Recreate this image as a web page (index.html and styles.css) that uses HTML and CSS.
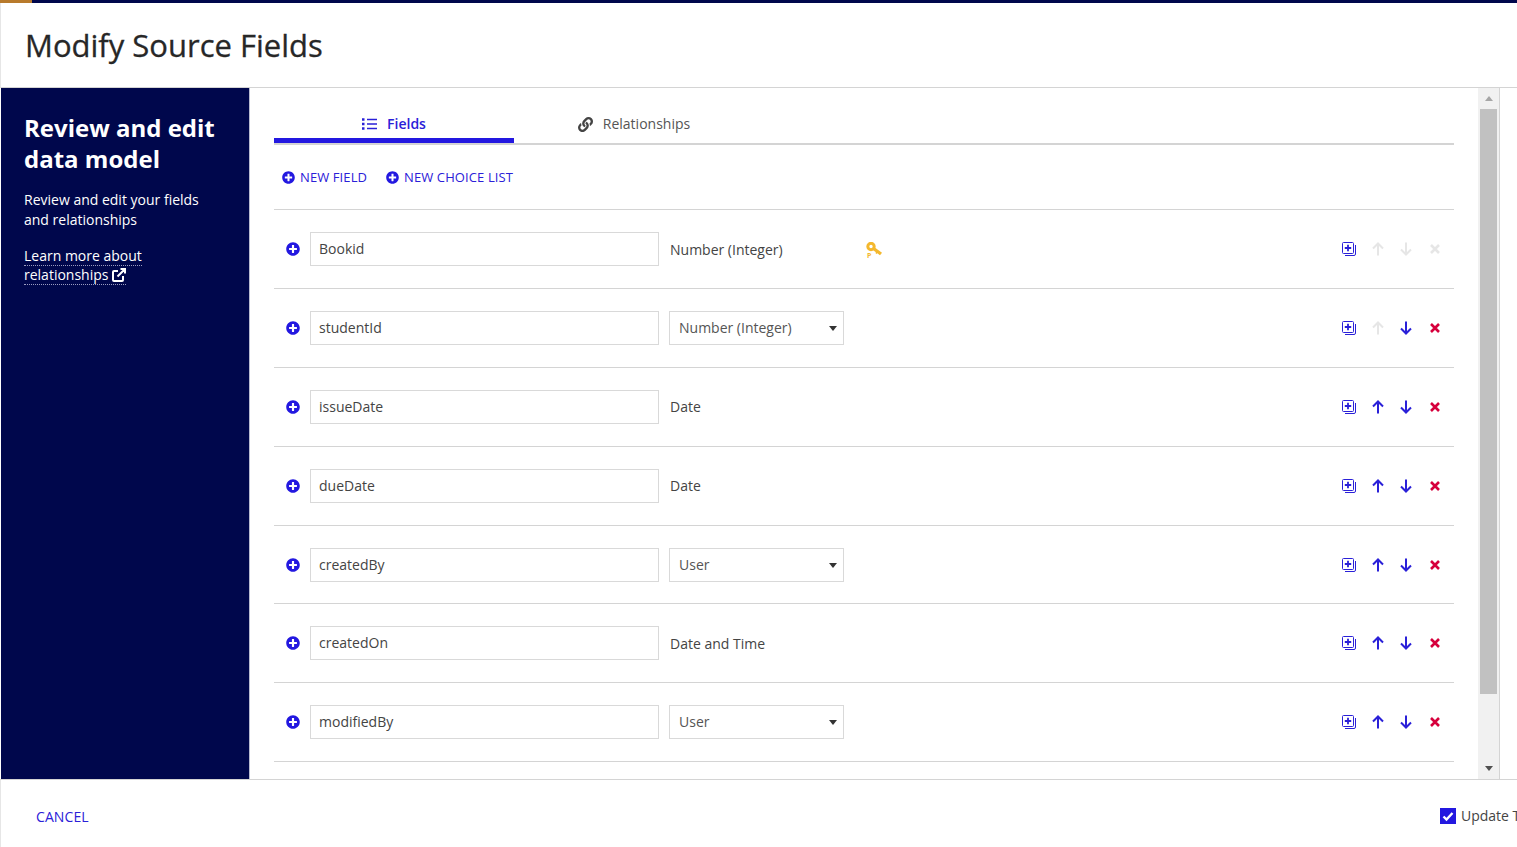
FILE: index.html
```html
<!DOCTYPE html>
<html lang="en">
<head>
    <meta charset="UTF-8">
    <title>Modify Source Fields</title>
    <link rel="stylesheet" href="styles.css">
</head>
<body>
    <svg class="sprite" xmlns="http://www.w3.org/2000/svg">
        <symbol id="i-plus" viewBox="0 0 512 512"><path fill="currentColor" d="M256 8C119 8 8 119 8 256s111 248 248 248 248-111 248-248S393 8 256 8zm144 276c0 6.6-5.4 12-12 12h-92v92c0 6.6-5.4 12-12 12h-56c-6.6 0-12-5.4-12-12v-92h-92c-6.6 0-12-5.4-12-12v-56c0-6.6 5.4-12 12-12h92v-92c0-6.6 5.4-12 12-12h56c6.6 0 12 5.4 12 12v92h92c6.6 0 12 5.4 12 12v56z"/></symbol>
        <symbol id="i-copy" viewBox="0 0 14 14"><path fill="none" stroke="currentColor" stroke-width="1" d="M1.5.5h9a1 1 0 0 1 1 1v9a1 1 0 0 1-1 1h-9a1 1 0 0 1-1-1v-9a1 1 0 0 1 1-1z"/><path fill="none" stroke="currentColor" stroke-width="1" d="M13.5 3v9a1.5 1.5 0 0 1-1.5 1.5H3"/><path fill="none" stroke="currentColor" stroke-width="1.8" d="M6 2.800v6.400M2.800 6h6.400"/></symbol>
        <symbol id="i-up" viewBox="0 0 12 14"><path fill="none" stroke="currentColor" stroke-width="2" d="M6 13.500V1.500M1 6.500l5-5 5 5"/></symbol>
        <symbol id="i-down" viewBox="0 0 12 14"><path fill="none" stroke="currentColor" stroke-width="2" d="M6 .5v12M1 7.500l5 5 5-5"/></symbol>
        <symbol id="i-x" viewBox="0 0 10 10"><path fill="none" stroke="currentColor" stroke-width="2.600" d="M1 1l8 8M9 1l-8 8"/></symbol>
    </svg>

    <div class="topstrip"><span class="topstrip-logo"></span></div>

    <header class="header">
        <h1>Modify Source Fields</h1>
    </header>

    <div class="body-wrap">
        <aside class="sidebar">
            <h2>Review and edit data model</h2>
            <p>Review and edit your fields and relationships</p>
            <a class="learn" href="#"><span>Learn more about</span><br><span>relationships <svg class="ext" viewBox="0 0 14 14"><path fill="none" stroke="currentColor" stroke-width="2" d="M11 8v4a1 1 0 0 1-1 1H2a1 1 0 0 1-1-1V4a1 1 0 0 1 1-1h4M5.500 8.500L13 1M8.500 1H13v4.500"/></svg></span></a>
        </aside>

        <main class="content">
            <div class="tabs">
                <div class="tab active">
                    <svg class="tab-icon" viewBox="0 0 15 12"><path fill="none" stroke="currentColor" stroke-width="1.600" d="M5 1.500h10M5 6h10M5 10.500h10"/><path fill="none" stroke="currentColor" stroke-width="2.400" d="M0 1.500h2.500M0 6h2.500M0 10.500h2.500"/></svg>
                    Fields
                </div>
                <div class="tab">
                    <svg class="tab-icon link-icon" viewBox="0 0 512 512"><path fill="currentColor" d="M326.612 185.391c59.747 59.809 58.927 155.698.36 214.59-.11.12-.24.25-.36.37l-67.2 67.2c-59.27 59.27-155.699 59.262-214.96 0-59.27-59.26-59.27-155.7 0-214.96l37.106-37.106c9.84-9.84 26.786-3.3 27.294 10.606.648 17.722 3.826 35.527 9.69 52.721 1.986 5.822.567 12.262-3.783 16.612l-13.087 13.087c-28.026 28.026-28.905 73.66-1.155 101.96 28.024 28.579 74.086 28.749 102.325.51l67.2-67.19c28.191-28.191 28.073-73.757 0-101.83-3.701-3.694-7.429-6.564-10.341-8.569a16.037 16.037 0 0 1-6.947-12.606c-.396-10.567 3.348-21.456 11.698-29.806l21.054-21.055c5.521-5.521 14.182-6.199 20.584-1.731a152.482 152.482 0 0 1 20.522 17.197zM467.547 44.449c-59.261-59.262-155.69-59.27-214.96 0l-67.2 67.2c-.12.12-.25.25-.36.37-58.566 58.892-59.387 154.781.36 214.59a152.454 152.454 0 0 0 20.521 17.196c6.402 4.468 15.064 3.789 20.584-1.731l21.054-21.055c8.35-8.35 12.094-19.239 11.698-29.806a16.037 16.037 0 0 0-6.947-12.606c-2.912-2.005-6.64-4.875-10.341-8.569-28.073-28.073-28.191-73.639 0-101.83l67.2-67.19c28.239-28.239 74.3-28.069 102.325.51 27.75 28.3 26.872 73.934-1.155 101.96l-13.087 13.087c-4.35 4.35-5.769 10.79-3.783 16.612 5.864 17.194 9.042 34.999 9.69 52.721.509 13.906 17.454 20.446 27.294 10.606l37.106-37.106c59.271-59.259 59.271-155.699.001-214.959z"/></svg>
                    Relationships
                </div>
            </div>

            <div class="toolbar">
                <a class="tool-link" href="#"><svg class="icon"><use href="#i-plus"/></svg>NEW FIELD</a>
                <a class="tool-link" href="#"><svg class="icon"><use href="#i-plus"/></svg>NEW CHOICE LIST</a>
            </div>

            <div class="row">
                <svg class="icon add"><use href="#i-plus"/></svg>
                <input class="name" type="text" value="Bookid">
                <div class="type">Number (Integer)</div>
                <svg class="key" viewBox="0 0 16 20"><circle cx="5" cy="4.500" r="3.200" fill="none" stroke="#f4b82e" stroke-width="3"/><path fill="none" stroke="#f4b82e" stroke-width="3.400" d="M7.500 6.500l7.500 5.500"/><path fill="none" stroke="#f4b82e" stroke-width="1.600" d="M11.500 9.500l-1.500 2"/><text x="1" y="15.500" class="key-p">P</text></svg>
                <div class="actions">
                    <button><svg class="act"><use href="#i-copy"/></svg></button>
                    <button class="off"><svg class="act"><use href="#i-up"/></svg></button>
                    <button class="off"><svg class="act"><use href="#i-down"/></svg></button>
                    <button class="off"><svg class="act x"><use href="#i-x"/></svg></button>
                </div>
            </div>

            <div class="row">
                <svg class="icon add"><use href="#i-plus"/></svg>
                <input class="name" type="text" value="studentId">
                <div class="select">Number (Integer)</div>
                <div class="actions">
                    <button><svg class="act"><use href="#i-copy"/></svg></button>
                    <button class="off"><svg class="act"><use href="#i-up"/></svg></button>
                    <button><svg class="act"><use href="#i-down"/></svg></button>
                    <button class="del"><svg class="act x"><use href="#i-x"/></svg></button>
                </div>
            </div>

            <div class="row">
                <svg class="icon add"><use href="#i-plus"/></svg>
                <input class="name" type="text" value="issueDate">
                <div class="type">Date</div>
                <div class="actions">
                    <button><svg class="act"><use href="#i-copy"/></svg></button>
                    <button><svg class="act"><use href="#i-up"/></svg></button>
                    <button><svg class="act"><use href="#i-down"/></svg></button>
                    <button class="del"><svg class="act x"><use href="#i-x"/></svg></button>
                </div>
            </div>

            <div class="row">
                <svg class="icon add"><use href="#i-plus"/></svg>
                <input class="name" type="text" value="dueDate">
                <div class="type">Date</div>
                <div class="actions">
                    <button><svg class="act"><use href="#i-copy"/></svg></button>
                    <button><svg class="act"><use href="#i-up"/></svg></button>
                    <button><svg class="act"><use href="#i-down"/></svg></button>
                    <button class="del"><svg class="act x"><use href="#i-x"/></svg></button>
                </div>
            </div>

            <div class="row">
                <svg class="icon add"><use href="#i-plus"/></svg>
                <input class="name" type="text" value="createdBy">
                <div class="select">User</div>
                <div class="actions">
                    <button><svg class="act"><use href="#i-copy"/></svg></button>
                    <button><svg class="act"><use href="#i-up"/></svg></button>
                    <button><svg class="act"><use href="#i-down"/></svg></button>
                    <button class="del"><svg class="act x"><use href="#i-x"/></svg></button>
                </div>
            </div>

            <div class="row">
                <svg class="icon add"><use href="#i-plus"/></svg>
                <input class="name" type="text" value="createdOn">
                <div class="type">Date and Time</div>
                <div class="actions">
                    <button><svg class="act"><use href="#i-copy"/></svg></button>
                    <button><svg class="act"><use href="#i-up"/></svg></button>
                    <button><svg class="act"><use href="#i-down"/></svg></button>
                    <button class="del"><svg class="act x"><use href="#i-x"/></svg></button>
                </div>
            </div>

            <div class="row">
                <svg class="icon add"><use href="#i-plus"/></svg>
                <input class="name" type="text" value="modifiedBy">
                <div class="select">User</div>
                <div class="actions">
                    <button><svg class="act"><use href="#i-copy"/></svg></button>
                    <button><svg class="act"><use href="#i-up"/></svg></button>
                    <button><svg class="act"><use href="#i-down"/></svg></button>
                    <button class="del"><svg class="act x"><use href="#i-x"/></svg></button>
                </div>
            </div>
        </main>

        <div class="scrollbar">
            <span class="arrow up"></span>
            <div class="thumb"></div>
            <span class="arrow down"></span>
        </div>
    </div>

    <footer class="footer">
        <a class="cancel" href="#">CANCEL</a>
        <label class="update">
            <span class="checkbox"><svg viewBox="0 0 16 16"><path fill="none" stroke="#fff" stroke-width="2.400" d="M3.500 8.500l3 3 6-6.500"/></svg></span>
            Update Table
        </label>
    </footer>
</body>
</html>
```

FILE: styles.css
```css
* {
    box-sizing: border-box;
}
html, body {
    height: 100%;
}
body {
    margin: 0;
    height: 847px;
    overflow: hidden;
    display: flex;
    flex-direction: column;
    background-color: #fff;
    color: #333;
    font-family: "Open Sans", "Noto Sans", sans-serif;
    font-size: 14px;
}
a {
    text-decoration: none;
}
.sprite {
    display: none;
}

.topstrip {
    height: 3px;
    background-color: #00074c;
}
.topstrip-logo {
    display: block;
    width: 32px;
    height: 3px;
    background-color: #b87a2c;
}

.header {
    height: 85px;
    flex: none;
    padding-left: 25px;
    display: flex;
    align-items: center;
    border-left: 1px solid #e6e6e6;
    border-bottom: 1px solid #d4d4d4;
}
.header h1 {
    margin: 0 0 0 -1px;
    font-size: 31px;
    font-weight: 500;
    color: #272727;
    -webkit-text-stroke: 0.3px #272727;
}

.body-wrap {
    flex: 1;
    min-height: 0;
    display: flex;
    border-bottom: 1px solid #d4d4d4;
}

.sidebar {
    width: 249px;
    flex: none;
    margin-left: 1px;
    padding: 24px 24px 0 23px;
    background-color: #00074c;
    border-right: 1px solid #b9bbd0;
    color: #fff;
}
.sidebar h2 {
    margin: 0;
    font-size: 24px;
    line-height: 31px;
    font-weight: 700;
}
.sidebar p {
    margin: 16px 10px 0 0;
    line-height: 20px;
}
.learn {
    display: block;
    margin-top: 16px;
    color: #fff;
    line-height: 19px;
}
.learn span {
    border-bottom: 1px dotted #9a9cc0;
}
.ext {
    width: 14px;
    height: 14px;
    vertical-align: -2px;
}

.content {
    flex: 1;
    min-width: 0;
    overflow: hidden;
    padding: 0 24px 0 24px;
}

.tabs {
    display: flex;
    height: 57px;
    border-bottom: 2px solid #d4d4d4;
}
.tab {
    width: 240px;
    height: 55px;
    padding-top: 17px;
    display: flex;
    justify-content: center;
    align-items: center;
    gap: 10px;
    color: #555;
    line-height: 36px;
}
.tab.active {
    padding-top: 22px;
    color: #2a20d8;
    font-weight: 600;
    border-bottom: 5px solid #2318e0;
}
.tab-icon {
    width: 15px;
    height: 12px;
}
.link-icon {
    width: 15px;
    height: 15px;
    color: #444;
}

.toolbar {
    height: 65.35px;
    padding-left: 8px;
    display: flex;
    align-items: center;
    gap: 19px;
    border-bottom: 1px solid #d4d4d4;
}
.tool-link {
    display: flex;
    align-items: center;
    gap: 5px;
    color: #2a20d8;
    font-size: 13px;
    letter-spacing: 0.1px;
}
.tool-link .icon {
    width: 13px;
    height: 13px;
}
.icon {
    width: 14px;
    height: 14px;
    color: #2318e0;
    flex: none;
}

.row {
    height: 78.8px;
    padding-top: 0.2px;
    padding-left: 12px;
    display: flex;
    align-items: center;
    border-bottom: 1px solid #d4d4d4;
}
.add {
    margin-right: 10px;
}
.name {
    width: 349px;
    height: 34px;
    padding: 0 8px 1px;
    border: 1px solid #d9d9d9;
    outline: none;
    color: #444;
    font: 14px "Open Sans", "Noto Sans", sans-serif;
}
.type {
    margin-left: 11px;
    color: #444;
    width: 175px;
}
.select {
    position: relative;
    width: 175px;
    height: 34px;
    margin-left: 10px;
    padding-left: 9px;
    line-height: 32px;
    border: 1px solid #d9d9d9;
    color: #555;
}
.select::after {
    content: "";
    position: absolute;
    right: 6px;
    top: 14px;
    border-left: 4.500px solid transparent;
    border-right: 4.500px solid transparent;
    border-top: 5px solid #333;
}
.key {
    width: 16px;
    height: 20px;
    margin-top: 5px;
    margin-left: 21px;
}
.key-p {
    font-size: 7px;
    font-weight: 700;
    fill: #f4b82e;
}

.actions {
    margin-left: auto;
    padding-right: 5px;
    display: flex;
}
.actions button {
    width: 28.5px;
    height: 16px;
    padding: 0;
    border: none;
    background: none;
    color: #2a20d8;
    display: flex;
    justify-content: center;
    align-items: center;
}
.actions button.off {
    color: #e6e6e6;
}
.actions button.del {
    color: #d6003c;
}
.act {
    width: 14px;
    height: 14px;
}
.act.x {
    width: 10px;
    height: 10px;
}

.scrollbar {
    width: 22px;
    margin-right: 17px;
    padding-right: 2px;
    flex: none;
    display: flex;
    flex-direction: column;
    background-color: #f1f1f1;
    border-right: 1px solid #d4d4d4;
}
.arrow {
    height: 21px;
    flex: none;
    margin-left: 2px;
    display: flex;
    justify-content: center;
    align-items: center;
}
.arrow::before {
    content: "";
    border-left: 4px solid transparent;
    border-right: 4px solid transparent;
}
.arrow.up::before {
    border-bottom: 5px solid #a6a6a6;
}
.arrow.down {
    margin-top: auto;
}
.arrow.down::before {
    border-top: 5px solid #505050;
}
.thumb {
    height: 585px;
    margin-left: 2px;
    background-color: #c1c1c1;
}

.footer {
    height: 67px;
    flex: none;
    padding-top: 6px;
    display: flex;
    align-items: center;
    overflow: hidden;
    border-left: 1px solid #e6e6e6;
}
.cancel {
    flex: none;
    width: 1439px;
    padding-left: 35px;
    color: #2a20d8;
    letter-spacing: 0.1px;
}
.update {
    flex: none;
    display: flex;
    align-items: center;
    gap: 5px;
    margin-top: -2px;
    white-space: nowrap;
    color: #444;
}
.checkbox {
    width: 16px;
    height: 16px;
    flex: none;
    background-color: #2318e0;
    display: flex;
}
```
